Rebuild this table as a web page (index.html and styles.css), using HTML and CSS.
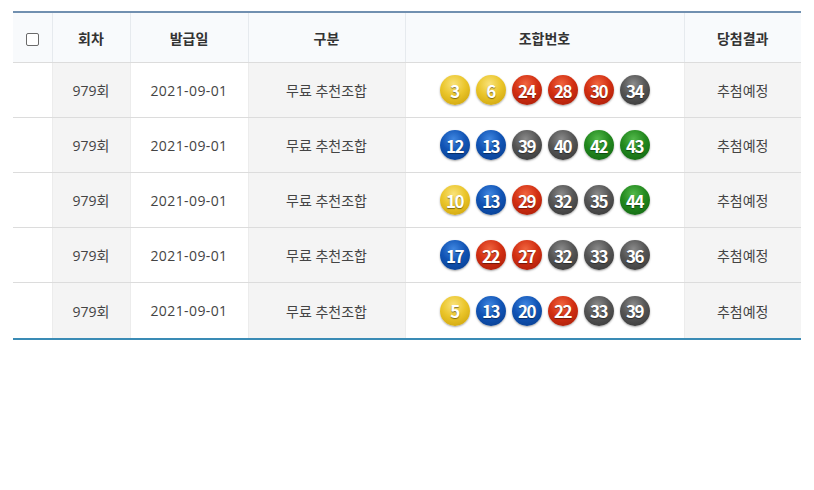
FILE: index.html
```html
<!DOCTYPE html>
<html lang="ko">
<head>
<meta charset="utf-8">
<link rel="stylesheet" href="styles.css">
</head>
<body>
<div class="wrap">
<table class="tbl">
  <colgroup>
    <col class="c-chk"><col class="c-no"><col class="c-date"><col class="c-type"><col class="c-nums"><col class="c-res">
  </colgroup>
  <thead>
    <tr>
      <th><span class="chk"></span></th>
      <th>회차</th>
      <th>발급일</th>
      <th>구분</th>
      <th>조합번호</th>
      <th>당첨결과</th>
    </tr>
  </thead>
  <tbody>
    <tr>
      <td></td><td class="g">979회</td><td class="d">2021-09-01</td><td class="g">무료 추천조합</td>
      <td><div class="balls"><span class="ball y">3</span><span class="ball y">6</span><span class="ball r">24</span><span class="ball r">28</span><span class="ball r">30</span><span class="ball k">34</span></div></td>
      <td class="g">추첨예정</td>
    </tr>
    <tr>
      <td></td><td class="g">979회</td><td class="d">2021-09-01</td><td class="g">무료 추천조합</td>
      <td><div class="balls"><span class="ball b">12</span><span class="ball b">13</span><span class="ball k">39</span><span class="ball k">40</span><span class="ball gr">42</span><span class="ball gr">43</span></div></td>
      <td class="g">추첨예정</td>
    </tr>
    <tr>
      <td></td><td class="g">979회</td><td class="d">2021-09-01</td><td class="g">무료 추천조합</td>
      <td><div class="balls"><span class="ball y">10</span><span class="ball b">13</span><span class="ball r">29</span><span class="ball k">32</span><span class="ball k">35</span><span class="ball gr">44</span></div></td>
      <td class="g">추첨예정</td>
    </tr>
    <tr>
      <td></td><td class="g">979회</td><td class="d">2021-09-01</td><td class="g">무료 추천조합</td>
      <td><div class="balls"><span class="ball b">17</span><span class="ball r">22</span><span class="ball r">27</span><span class="ball k">32</span><span class="ball k">33</span><span class="ball k">36</span></div></td>
      <td class="g">추첨예정</td>
    </tr>
    <tr class="last">
      <td></td><td class="g">979회</td><td class="d">2021-09-01</td><td class="g">무료 추천조합</td>
      <td><div class="balls"><span class="ball y">5</span><span class="ball b">13</span><span class="ball b">20</span><span class="ball r">22</span><span class="ball k">33</span><span class="ball k">39</span></div></td>
      <td class="g">추첨예정</td>
    </tr>
  </tbody>
</table>
</div>
</body>
</html>
```
FILE: styles.css
```css
html, body {
  margin: 0;
  padding: 0;
  background: #fff;
}
body {
  font-family: "Open Sans", "Noto Sans CJK KR", sans-serif;
  color: #444;
}
.wrap {
  padding: 11px 13px 0 13px;
}
.tbl {
  width: 788px;
  border-collapse: collapse;
  table-layout: fixed;
  border-top: 2px solid #7190b0;
  border-bottom: 2px solid #3a8bb5;
}
.c-chk { width: 39px; }
.c-no { width: 78px; }
.c-date { width: 118px; }
.c-type { width: 157px; }
.c-nums { width: 279px; }
.c-res { width: 117px; }

.tbl th {
  height: 49px;
  padding: 0;
  background: #f8fafc;
  font-family: "Noto Sans CJK KR", sans-serif;
  font-size: 14px;
  font-weight: bold;
  color: #333;
  text-align: center;
  border-left: 1px solid #e6eaee;
  border-bottom: 1px solid #dcdcdc;
}
.tbl th:first-child { border-left: none; }
.tbl td {
  height: 54px;
  padding: 0;
  font-size: 14px;
  color: #444;
  text-align: center;
  border-left: 1px solid #ececec;
  border-bottom: 1px solid #dcdcdc;
  background: #fff;
}
.tbl td.d { letter-spacing: 0.4px; }
.tbl td:first-child { border-left: none; }
.tbl tr.last td { border-bottom: none; height: 55px; }
.tbl td.g { background: #f4f4f4; }

.chk {
  display: inline-block;
  width: 11px;
  height: 11px;
  border: 1px solid #6a6a6a;
  border-radius: 2px;
  background: #fff;
  vertical-align: middle;
}

.balls {
  display: flex;
  justify-content: center;
  gap: 6px;
  padding-left: 1px;
}
.ball {
  width: 30px;
  height: 30px;
  border-radius: 50%;
  display: flex;
  align-items: center;
  justify-content: center;
  color: #fff;
  font-size: 17px;
  font-weight: bold;
  letter-spacing: -1.5px;
  text-indent: -1px;
  text-shadow: 0 1px 1px rgba(0,0,0,0.45);
  box-shadow: 0 1px 2px rgba(0,0,0,0.35);
  font-family: "Noto Sans CJK KR", sans-serif;
  line-height: 1;
}
.ball.y { background: radial-gradient(circle at 45% 30%, #f9e27a 0%, #eac52a 45%, #c89d05 100%); }
.ball.b { background: radial-gradient(circle at 45% 30%, #3f86e0 0%, #1154b5 45%, #073a88 100%); }
.ball.r { background: radial-gradient(circle at 45% 30%, #f0643e 0%, #d22f12 45%, #a11a07 100%); }
.ball.k { background: radial-gradient(circle at 45% 30%, #8a8a8a 0%, #555 45%, #333 100%); }
.ball.gr { background: radial-gradient(circle at 45% 30%, #52b84a 0%, #22881e 45%, #0f6010 100%); }
```
